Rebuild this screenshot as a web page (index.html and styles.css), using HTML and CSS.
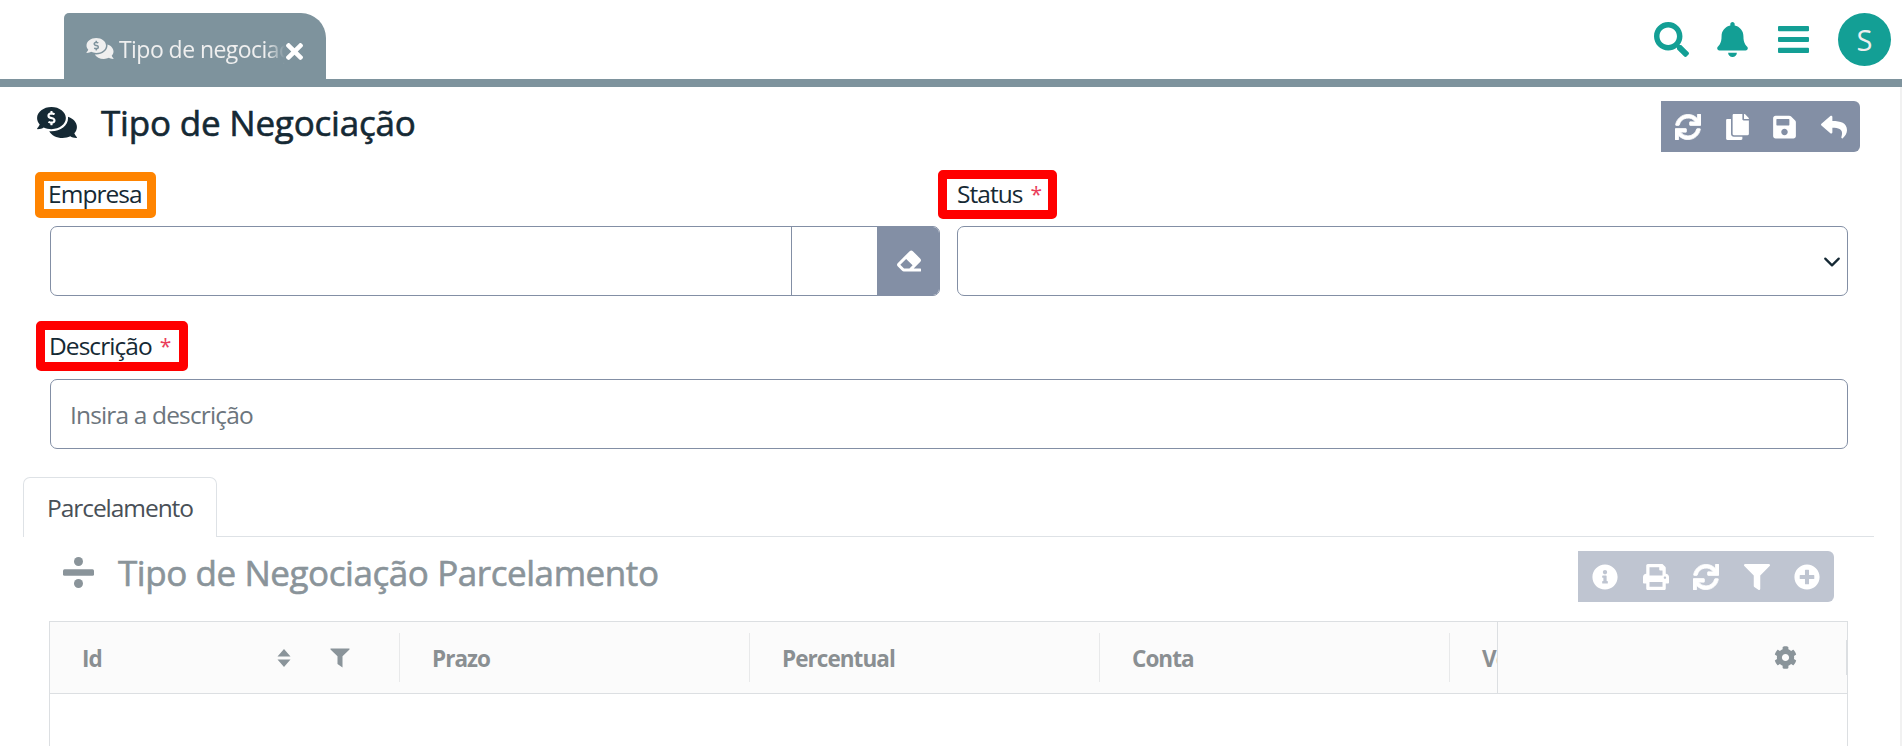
FILE: index.html
```html
<!DOCTYPE html>
<html lang="pt-BR">
<head>
<meta charset="utf-8">
<title>Tipo de Negociação</title>
<link rel="stylesheet" href="styles.css">
</head>
<body>
<svg class="sprite" aria-hidden="true">
  <symbol id="comments" viewBox="0 32 576 448"><path d="M416 192c0-88.37-93.12-160-208-160S0 103.63 0 192c0 34.27 14.13 65.95 37.97 92.03C24.62 314.22 2.52 338.16 2.2 338.5A7.995 7.995 0 0 0 8 352c36.58 0 66.93-12.25 88.73-24.98C128.93 342.76 167.02 352 208 352c114.88 0 208-71.63 208-160zm-224 96v-16.29c-11.29-.58-22.27-4.52-31.37-11.35-3.9-2.93-4.1-8.77-.57-12.14l11.75-11.21c2.77-2.64 6.89-2.76 10.13-.73 3.87 2.42 8.26 3.72 12.82 3.72h28.11c6.5 0 11.8-5.92 11.8-13.19 0-5.95-3.61-11.19-8.77-12.73l-45-13.5c-18.59-5.58-31.58-23.42-31.58-43.39 0-24.52 19.05-44.44 42.67-45.07V96c0-4.42 3.58-8 8-8h16c4.42 0 8 3.58 8 8v16.29c11.29.58 22.27 4.51 31.37 11.35 3.9 2.93 4.1 8.77.57 12.14l-11.75 11.21c-2.77 2.64-6.89 2.76-10.13.73-3.87-2.43-8.26-3.72-12.82-3.72h-28.11c-6.5 0-11.8 5.92-11.8 13.19 0 5.95 3.61 11.19 8.77 12.73l45 13.5c18.59 5.58 31.58 23.42 31.58 43.39 0 24.53-19.05 44.44-42.67 45.07V288c0 4.42-3.58 8-8 8h-16c-4.42 0-8-3.58-8-8zm346.01 124.04C561.86 385.96 576 354.27 576 320c0-66.94-53.49-124.2-129.33-148.07.86 6.6 1.33 13.29 1.33 20.07 0 105.87-107.66 192-240 192-10.78 0-21.32-.77-31.73-1.88C207.8 439.63 281.77 480 368 480c40.98 0 79.07-9.24 111.27-24.98C501.07 467.75 531.42 480 568 480c3.2 0 6.09-1.91 7.34-4.84 1.27-2.94.66-6.34-1.55-8.67-.31-.33-22.42-24.24-35.78-54.45z"/></symbol>
  <symbol id="times" viewBox="0 80 352 352"><path d="M242.72 256l100.07-100.07c12.28-12.28 12.28-32.19 0-44.48l-22.24-22.24c-12.28-12.28-32.19-12.28-44.48 0L176 189.28 75.93 89.21c-12.28-12.28-32.19-12.28-44.48 0L9.21 111.45c-12.28 12.28-12.28 32.19 0 44.48L109.28 256 9.21 356.07c-12.28 12.28-12.28 32.19 0 44.48l22.24 22.24c12.28 12.28 32.2 12.28 44.48 0L176 322.72l100.07 100.07c12.28 12.28 32.2 12.28 44.48 0l22.24-22.24c12.28-12.28 12.28-32.19 0-44.48L242.72 256z"/></symbol>
  <symbol id="search" viewBox="0 0 512 512"><path d="M505 442.7L405.3 343c-4.5-4.5-10.6-7-17-7H372c27.6-35.3 44-79.7 44-128C416 93.1 322.9 0 208 0S0 93.1 0 208s93.1 208 208 208c48.3 0 92.7-16.4 128-44v16.3c0 6.4 2.5 12.5 7 17l99.7 99.7c9.4 9.4 24.6 9.4 33.9 0l28.3-28.3c9.4-9.4 9.4-24.6.1-34zM208 336c-70.7 0-128-57.2-128-128 0-70.7 57.2-128 128-128 70.7 0 128 57.2 128 128 0 70.7-57.2 128-128 128z"/></symbol>
  <symbol id="bell" viewBox="0 0 448 512"><path d="M224 512c35.32 0 63.97-28.65 63.97-64H160.03c0 35.35 28.65 64 63.97 64zm215.39-149.71c-19.32-20.76-55.47-51.99-55.47-154.29 0-77.7-54.48-139.9-127.94-155.16V32c0-17.67-14.32-32-31.98-32s-31.98 14.33-31.98 32v20.84C118.56 68.1 64.08 130.3 64.08 208c0 102.3-36.15 133.53-55.47 154.29-6 6.45-8.66 14.16-8.61 21.71.11 16.4 12.98 32 32.1 32h383.8c19.12 0 32-15.6 32.1-32 .05-7.55-2.61-15.27-8.61-21.71z"/></symbol>
  <symbol id="bars" viewBox="0 0 31 27"><path d="M1 0h29a1 1 0 0 1 1 1v3.200a1 1 0 0 1-1 1H1a1 1 0 0 1-1-1V1a1 1 0 0 1 1-1zM1 10.900h29a1 1 0 0 1 1 1v3.200a1 1 0 0 1-1 1H1a1 1 0 0 1-1-1v-3.200a1 1 0 0 1 1-1zM1 21.800h29a1 1 0 0 1 1 1V26a1 1 0 0 1-1 1H1a1 1 0 0 1-1-1v-3.200a1 1 0 0 1 1-1z"/></symbol>
  <symbol id="sync" viewBox="0 0 512 512"><path stroke="currentColor" stroke-width="16" d="M440.65 12.57l4 82.77A247.16 247.16 0 0 0 255.83 8C134.73 8 33.91 94.92 12.29 209.82A12 12 0 0 0 24.09 224h49.05a12 12 0 0 0 11.67-9.26 175.91 175.91 0 0 1 317-56.94l-101.46-4.86a12 12 0 0 0-12.57 12v47.41a12 12 0 0 0 12 12H500a12 12 0 0 0 12-12V12a12 12 0 0 0-12-12h-47.37a12 12 0 0 0-11.98 12.57zM255.83 432a175.61 175.61 0 0 1-146-77.8l101.8 4.87a12 12 0 0 0 12.57-12v-47.4a12 12 0 0 0-12-12H12a12 12 0 0 0-12 12V500a12 12 0 0 0 12 12h47.35a12 12 0 0 0 12-12.6l-4.15-82.57A247.17 247.17 0 0 0 255.83 504c121.11 0 221.93-86.92 243.55-201.82a12 12 0 0 0-11.8-14.18h-49.05a12 12 0 0 0-11.67 9.26A175.86 175.86 0 0 1 255.83 432z"/></symbol>
  <symbol id="copy" viewBox="0 0 448 512"><path d="M320 448v40c0 13.255-10.745 24-24 24H24c-13.255 0-24-10.745-24-24V120c0-13.255 10.745-24 24-24h72v296c0 30.879 25.121 56 56 56h168zm0-344V0H152c-13.255 0-24 10.745-24 24v368c0 13.255 10.745 24 24 24h272c13.255 0 24-10.745 24-24V128H344c-13.200 0-24-10.800-24-24zm120.971-31.029L375.029 7.029A24 24 0 0 0 358.059 0H352v96h96v-6.059a24 24 0 0 0-7.029-16.970z"/></symbol>
  <symbol id="save" viewBox="0 0 448 512"><path d="M433.941 129.941l-83.882-83.882A48 48 0 0 0 316.118 32H48C21.49 32 0 53.49 0 80v352c0 26.51 21.49 48 48 48h352c26.51 0 48-21.49 48-48V163.882a48 48 0 0 0-14.059-33.941zM224 416c-35.346 0-64-28.654-64-64 0-35.346 28.654-64 64-64s64 28.654 64 64c0 35.346-28.654 64-64 64zm96-304.52V212c0 6.627-5.373 12-12 12H76c-6.627 0-12-5.373-12-12V108c0-6.627 5.373-12 12-12h228.52c3.183 0 6.235 1.264 8.485 3.515l3.48 3.48A11.996 11.996 0 0 1 320 111.48z"/></symbol>
  <symbol id="reply" viewBox="0 0 512 512"><path d="M8.309 189.836L184.313 37.851C199.719 24.546 224 35.347 224 56.015v80.053c160.629 1.839 288 34.032 288 186.258 0 61.441-39.581 122.309-83.333 154.132-13.653 9.931-33.111-2.533-28.077-18.631 45.344-145.012-21.507-183.51-176.59-185.742V360c0 20.7-24.3 31.453-39.687 18.164l-176.004-152c-11.071-9.562-11.086-26.753 0-36.328z"/></symbol>
  <symbol id="eraser" viewBox="0 0 512 512"><path d="M497.941 273.941c18.745-18.745 18.745-49.137 0-67.882l-160-160c-18.745-18.745-49.136-18.746-67.883 0l-256 256c-18.745 18.745-18.745 49.137 0 67.882l96 96A48.004 48.004 0 0 0 144 480h356c6.627 0 12-5.373 12-12v-40c0-6.627-5.373-12-12-12H355.883l142.058-142.059zm-302.627-62.627l137.373 137.373L265.373 416H150.628l-80-80 124.686-124.686z"/></symbol>
  <symbol id="info" viewBox="0 0 512 512"><path d="M256 8C119.043 8 8 119.083 8 256c0 136.997 111.043 248 248 248s248-111.003 248-248C504 119.083 392.957 8 256 8zm0 110c23.196 0 42 18.804 42 42s-18.804 42-42 42-42-18.804-42-42 18.804-42 42-42zm56 254c0 6.627-5.373 12-12 12h-88c-6.627 0-12-5.373-12-12v-24c0-6.627 5.373-12 12-12h12v-64h-12c-6.627 0-12-5.373-12-12v-24c0-6.627 5.373-12 12-12h64c6.627 0 12 5.373 12 12v100h12c6.627 0 12 5.373 12 12v24z"/></symbol>
  <symbol id="print" viewBox="0 0 512 512"><path d="M448 192V77.25c0-8.49-3.37-16.62-9.37-22.63L393.37 9.37c-6-6-14.14-9.37-22.63-9.37H96C78.33 0 64 14.33 64 32v160c-35.35 0-64 28.65-64 64v112c0 8.84 7.16 16 16 16h48v96c0 17.67 14.33 32 32 32h320c17.67 0 32-14.33 32-32v-96h48c8.84 0 16-7.16 16-16V256c0-35.35-28.65-64-64-64zm-64 256H128v-96h256v96zm0-224H128V64h192v48c0 8.84 7.16 16 16 16h48v96zm48 72c-13.25 0-24-10.75-24-24 0-13.26 10.75-24 24-24s24 10.74 24 24c0 13.25-10.75 24-24 24z"/></symbol>
  <symbol id="filter" viewBox="0 0 512 512"><path d="M487.976 0H24.028C2.71 0-8.047 25.866 7.058 40.971L192 225.941V432c0 7.831 3.821 15.17 10.237 19.662l80 55.98C298.02 518.69 320 507.493 320 487.98V225.941l184.947-184.97C520.021 25.896 509.338 0 487.976 0z"/></symbol>
  <symbol id="plus" viewBox="0 0 512 512"><path d="M256 8C119 8 8 119 8 256s111 248 248 248 248-111 248-248S393 8 256 8zm144 276c0 6.6-5.4 12-12 12h-92v92c0 6.6-5.4 12-12 12h-56c-6.6 0-12-5.4-12-12v-92h-92c-6.6 0-12-5.4-12-12v-56c0-6.6 5.4-12 12-12h92v-92c0-6.6 5.4-12 12-12h56c6.600 0 12 5.400 12 12v92h92c6.600 0 12 5.400 12 12v56z"/></symbol>
  <symbol id="cog" viewBox="0 0 512 512"><path d="M487.4 315.7l-42.6-24.6c4.3-23.2 4.3-47 0-70.2l42.6-24.6c4.9-2.8 7.1-8.6 5.5-14-11.1-35.6-30-67.8-54.7-94.6-3.8-4.1-10-5.1-14.8-2.3L380.8 110c-17.9-15.4-38.5-27.3-60.8-35.1V25.8c0-5.6-3.9-10.5-9.4-11.7-36.7-8.2-74.3-7.8-109.2 0-5.5 1.2-9.4 6.1-9.4 11.7V75c-22.2 7.9-42.8 19.8-60.8 35.1L88.7 85.5c-4.9-2.8-11-1.9-14.8 2.3-24.7 26.7-43.6 58.9-54.7 94.6-1.7 5.4.6 11.2 5.5 14L67.3 221c-4.3 23.2-4.3 47 0 70.2l-42.6 24.6c-4.9 2.8-7.1 8.6-5.5 14 11.1 35.6 30 67.8 54.7 94.6 3.8 4.1 10 5.1 14.8 2.3l42.6-24.6c17.9 15.4 38.5 27.3 60.8 35.1v49.2c0 5.6 3.9 10.5 9.4 11.7 36.7 8.2 74.3 7.8 109.2 0 5.5-1.2 9.4-6.1 9.4-11.7v-49.2c22.2-7.9 42.8-19.8 60.8-35.1l42.6 24.6c4.9 2.8 11 1.9 14.8-2.3 24.7-26.7 43.6-58.9 54.7-94.6 1.500-5.500-.7-11.300-5.600-14.100zM256 336c-44.1 0-80-35.900-80-80s35.900-80 80-80 80 35.900 80 80-35.900 80-80 80z"/></symbol>
  <symbol id="divide" viewBox="0 0 31 31"><circle cx="15.500" cy="4.500" r="4.500"/><circle cx="15.500" cy="26.500" r="4.500"/><rect y="12.300" width="31" height="6.500" rx="1.500"/></symbol>
  <symbol id="sort" viewBox="0 0 14 18"><path d="M7 0l6.500 7.500H.5zM7 18L.5 10.500h13z"/></symbol>
  <symbol id="funnel" viewBox="0 0 20 20"><path d="M.5.500h19v1l-7 6.800v11.200L7.500 16V8.300l-7-6.800z"/></symbol>
</svg>

<header class="topbar">
  <div class="page-tab">
    <svg class="page-tab-icon"><use href="#comments"/></svg>
    <span class="page-tab-text">Tipo de negociação</span>
    <svg class="page-tab-close"><use href="#times"/></svg>
  </div>
  <nav class="actions">
    <svg class="i-search"><use href="#search"/></svg>
    <svg class="i-bell"><use href="#bell"/></svg>
    <svg class="i-bars"><use href="#bars"/></svg>
    <span class="avatar">S</span>
  </nav>
</header>

<main class="content">
  <section class="heading">
    <svg class="heading-icon"><use href="#comments"/></svg>
    <h1>Tipo de Negociação</h1>
    <div class="toolbar">
      <svg><use href="#sync"/></svg>
      <svg class="narrow"><use href="#copy"/></svg>
      <svg class="narrow"><use href="#save"/></svg>
      <svg><use href="#reply"/></svg>
    </div>
  </section>

  <form class="form">
    <div class="field company">
      <label class="mark optional"><span>Empresa</span></label>
      <div class="lookup">
        <span class="lookup-text"></span>
        <span class="lookup-code"></span>
        <span class="lookup-clear"><svg><use href="#eraser"/></svg></span>
      </div>
    </div>
    <div class="field status">
      <label class="mark required"><span>Status</span> <b>*</b></label>
      <div class="box select"><svg viewBox="0 0 16 16"><path d="M2 5l6 6 6-6"/></svg></div>
    </div>
    <div class="field description">
      <label class="mark required"><span>Descrição</span> <b>*</b></label>
      <div class="box"><span class="placeholder">Insira a descrição</span></div>
    </div>
  </form>

  <div class="tabs"><div class="tab"><span>Parcelamento</span></div></div>

  <section class="subheading">
    <svg class="divide"><use href="#divide"/></svg>
    <h2>Tipo de Negociação Parcelamento</h2>
    <div class="toolbar muted">
      <svg><use href="#info"/></svg>
      <svg><use href="#print"/></svg>
      <svg><use href="#sync"/></svg>
      <svg><use href="#filter"/></svg>
      <svg><use href="#plus"/></svg>
    </div>
  </section>

  <div class="grid">
    <div class="grid-head">
      <div class="cols">
        <div class="col"><span class="c-id">Id</span><svg class="sort"><use href="#sort"/></svg><svg class="funnel"><use href="#funnel"/></svg></div>
        <div class="col"><span class="c-prazo">Prazo</span></div>
        <div class="col"><span class="c-perc">Percentual</span></div>
        <div class="col"><span class="c-conta">Conta</span></div>
        <div class="col"><span>Ve</span></div>
      </div>
      <div class="pinned"><svg class="cog"><use href="#cog"/></svg><i></i></div>
    </div>
  </div>
</main>
</body>
</html>
```
FILE: styles.css
```css
* { box-sizing: border-box; }

body {
  margin: 0;
  height: 746px;
  overflow: hidden;
  display: flex;
  flex-direction: column;
  background: #fff;
  color: #152934;
  font-family: "Open Sans", "Noto Sans", sans-serif;
  font-size: 24.5px;
  letter-spacing: -0.95px;
}

svg { display: block; flex: none; fill: currentColor; }
.sprite { position: absolute; width: 0; height: 0; }

/* Top bar */
.topbar {
  flex: none;
  height: 87px;
  display: flex;
  justify-content: space-between;
  align-items: flex-start;
  padding: 13px 11px 0 64px;
  border-bottom: 8px solid #7e939d;
}
.page-tab {
  width: 262px;
  height: 66px;
  display: flex;
  align-items: center;
  padding: 5px 22px 0 22px;
  background: #7e939d;
  border-radius: 5px 25px 0 0;
  color: #efefef;
}
.page-tab-icon { width: 28px; height: 21px; }
.page-tab-text {
  width: 167px;
  height: 34px;
  margin: 0 0 0 5px;
  overflow: hidden;
  white-space: nowrap;
  font-size: 23px;
  line-height: 34px;
  letter-spacing: -0.55px;
  -webkit-mask-image: linear-gradient(90deg, #000 148px, transparent 166px);
  mask-image: linear-gradient(90deg, #000 148px, transparent 166px);
}
.page-tab-close { width: 17px; height: 17px; margin-top: 6px; color: #fff; }
.actions { display: flex; align-items: center; color: #139f95; }
.i-search { width: 35px; height: 35px; margin-right: 28px; }
.i-bell { width: 31px; height: 35px; margin-right: 30px; }
.i-bars { width: 31px; height: 27px; margin-right: 29px; }
.avatar {
  width: 53px;
  height: 53px;
  border-radius: 50%;
  background: #139f95;
  color: #efefef;
  font-size: 29px;
  letter-spacing: 0;
  line-height: 54px;
  text-align: center;
}

.content {
  flex: 1;
  display: flex;
  flex-direction: column;
  border-right: 2px solid #f1f1f1;
}

/* Headings */
.heading {
  height: 65px;
  display: flex;
  align-items: flex-start;
  padding: 14px 40px 0 37px;
}
.heading-icon { width: 40px; height: 31px; margin-top: 6px; }
h1, h2 {
  margin: 0;
  font-size: 35px;
  font-weight: 500;
  line-height: 48px;
  white-space: nowrap;
  -webkit-text-stroke: 0.6px currentColor;
}
h1 { margin: -2px 0 0 24px; letter-spacing: -0.2px; }
.toolbar {
  width: 199px;
  height: 51px;
  display: flex;
  align-items: center;
  justify-content: space-between;
  margin-left: auto;
  padding: 0 13px 0 14px;
  background: #838fa5;
  border-radius: 0 6px 6px 0;
  color: #fff;
}
.toolbar svg { width: 26px; height: 26px; }
.toolbar .narrow { width: 23px; }
.toolbar.muted { width: 256px; background: #bfc5d1; padding: 0 14px; }

/* Form */
.form {
  display: grid;
  grid-template-columns: 890px 891px;
  column-gap: 17px;
  padding: 18px 0 0 50px;
}
.field { display: flex; flex-direction: column; align-items: flex-start; }
.description { grid-column: 1 / 3; }
.mark {
  display: flex;
  align-items: center;
  gap: 8px;
  border: 9px solid #ff8400;
  border-radius: 5px;
  white-space: nowrap;
  line-height: 28px;
}
.mark span { margin-top: -2px; }
.mark b { margin-top: -2px; color: #ea3e5b; font-size: 21px; font-weight: 400; letter-spacing: 0; }
.required { border-color: #f00; }
.company .mark { width: 121px; height: 46px; margin: 2px 0 8px -15px; padding-left: 4px; }
.status .mark { width: 119px; height: 49px; margin: 0 0 7px -19px; padding-left: 10px; }
.description .mark { width: 152px; height: 50px; margin: 25px 0 8px -14px; padding-left: 4px; }
.description .mark span, .description .mark b { margin-top: 0; }
.box, .lookup {
  width: 100%;
  height: 70px;
  display: flex;
  align-items: center;
  border: 1px solid #838fa5;
  border-radius: 7px;
}
.lookup { align-items: stretch; overflow: hidden; }
.lookup-text { width: 740px; }
.lookup-code { width: 86px; border-left: 1px solid #838fa5; }
.lookup-clear {
  flex: 1;
  display: flex;
  align-items: center;
  justify-content: center;
  background: #838fa5;
  color: #fff;
}
.lookup-clear svg { width: 24px; height: 24px; margin: 0 0 0 2px; }
.select { justify-content: flex-end; padding-right: 6px; }
.select svg {
  width: 18px;
  height: 18px;
  margin-top: 2px;
  fill: none;
  stroke: #152934;
  stroke-width: 2;
  stroke-linecap: round;
  stroke-linejoin: round;
}
.placeholder { margin-left: 19px; color: #6c757d; letter-spacing: -0.85px; }

/* Tab strip */
.tabs {
  height: 60px;
  margin: 28px 26px 0 23px;
  display: flex;
  border-bottom: 1px solid #dee2e6;
}
.tab {
  width: 194px;
  height: 60px;
  padding: 13px 0 0 23px;
  border: 1px solid #dee2e6;
  border-bottom: 0;
  border-radius: 7px 7px 0 0;
  background: #fff;
  color: #495057;
  line-height: 34px;
  letter-spacing: -1.05px;
}

.subheading {
  height: 84px;
  display: flex;
  align-items: flex-start;
  padding: 14px 66px 0 63px;
  color: #8a949a;
}
.divide { width: 31px; height: 31px; margin-top: 6px; }
h2 { margin: -2px 0 0 24px; letter-spacing: -0.43px; }

/* Grid */
.grid {
  flex: 1;
  width: 1799px;
  margin-left: 49px;
  border: 1px solid #dcdfe2;
  border-bottom: 0;
}
.grid-head {
  height: 72px;
  display: flex;
  border-bottom: 1px solid #dcdfe2;
  background: #fbfbfb;
}
.cols { width: 1447px; display: flex; align-items: center; overflow: hidden; }
.col {
  flex: none;
  width: 350px;
  height: 49px;
  display: flex;
  align-items: center;
  padding-left: 32px;
  border-right: 1px solid #e8e9ea;
  color: #8a8f92;
  font-size: 22.5px;
  font-weight: 700;
  letter-spacing: -0.95px;
}
.col span { margin-top: 2px; }
.col svg { color: #8a949a; }
.sort { width: 14px; height: 18px; margin-left: auto; }
.funnel { width: 20px; height: 20px; margin: 0 49px 0 39px; }
.pinned {
  flex: 1;
  display: flex;
  align-items: center;
  border-left: 1px solid #dcdfe2;
}
.cog { width: 23px; height: 23px; margin-left: 276px; color: #8a949a; }
.pinned i { width: 1px; height: 35px; margin-left: auto; background: #dcdfe2; }
```
